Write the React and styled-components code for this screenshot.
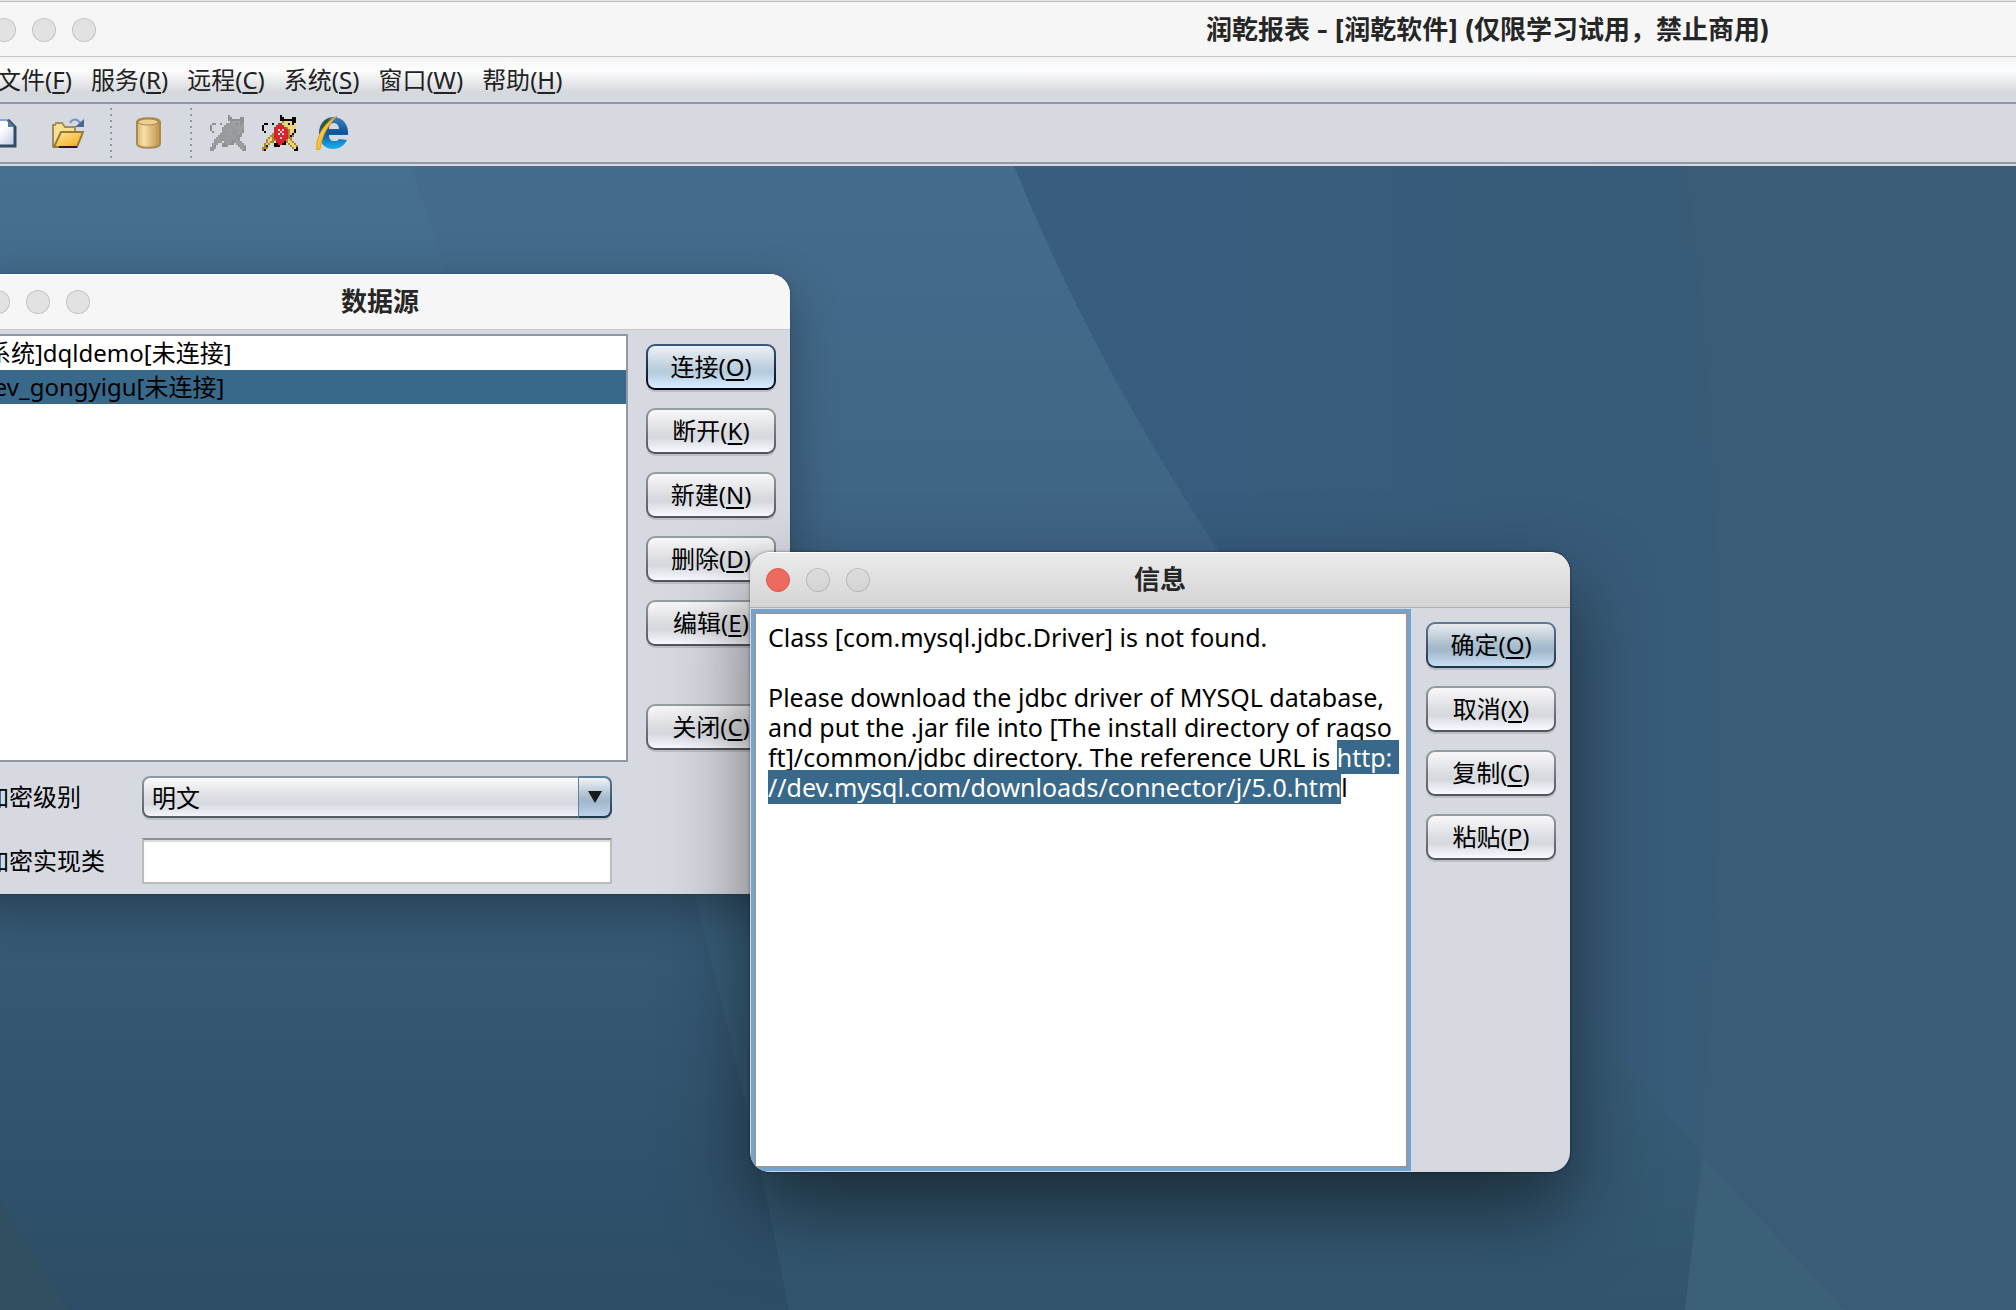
import React, { useEffect, useRef } from "react";
import styled, { createGlobalStyle, css } from "styled-components";

const GlobalStyle = createGlobalStyle`
* {
    box-sizing: border-box;
}
body {
    margin: 0;
    font-family: "Noto Sans", "Noto Sans CJK SC", sans-serif;
    font-size: 24px;
    color: #000;
}
button, select, input, textarea {
    font: inherit;
    color: inherit;
}
`;

const Screen = styled.div`
    min-height: 100vh;
    overflow: hidden;
    background: #e6e6e6;
    padding-top: 1px;
    display: flex;
`;

/* the frame is wider than the screen, its left edge is pushed outside */
const Frame = styled.div`
    flex: none;
    width: 150vw;
    margin-left: -24px;
    display: flex;
    flex-direction: column;
`;

const TitleBar = styled.header`
    display: grid;
    grid-template-columns: 1fr auto 1fr;
    align-items: center;
    height: 56px;
    padding: 0 16px;
    background: #f6f6f6;
    border-top: 1px solid #fff;
    border-bottom: 1px solid #c9c5c9;

    ${(props) =>
        props.$main &&
        css`
            padding-top: 2px;
            border-top-color: #bdbdbd;
        `}
    ${(props) =>
        props.$active &&
        css`
            background: linear-gradient(#ebebeb, #d4d4d4);
            border-bottom-color: #aeaeae;
        `}
`;

const Title = styled.h1`
    margin: 0;
    font-family: Inter, "Noto Sans CJK SC", sans-serif;
    font-size: 26px;
    line-height: 32px;
    font-weight: 700;
    color: #262626;
    white-space: nowrap;
`;

const Lights = styled.div`
    display: flex;
    gap: 16px;
`;

const Light = styled.button`
    width: 24px;
    height: 24px;
    padding: 0;
    border-radius: 50%;
    border: 1px solid ${(props) => (props.$red ? "#d9584d" : "rgba(0, 0, 0, 0.14)")};
    background: ${(props) => (props.$red ? "#ec6a5e" : "rgba(0, 0, 0, 0.08)")};

    ${(props) =>
        props.$dim &&
        css`
            background: rgba(0, 0, 0, 0.03);
        `}
`;

const MenuBar = styled.nav`
    display: flex;
    gap: 1px;
    height: 47px;
    padding-left: 12px;
    background: linear-gradient(#f3f6f5, #fdfdfd 30%, #d5d8dd 78%, #d6d9e0);
    border-bottom: 2px solid #9297a5;
`;

const MenuItem = styled.button`
    border: 0;
    background: none;
    padding: 0 9px;
    line-height: 32px;
    color: #222;
    white-space: nowrap;
`;

const Key = styled.span`
    text-decoration: underline;
    text-decoration-thickness: 2px;
    text-underline-offset: 3px;
`;

const ToolBar = styled.div`
    display: flex;
    align-items: center;
    height: 60px;
    padding-left: 2px;
    background: #d6d9e0;
    border-bottom: 2px solid #9297a5;
`;

const Tool = styled.button`
    display: flex;
    align-items: center;
    justify-content: center;
    width: 52px;
    height: 52px;
    padding: 0;
    border: 0;
    background: none;
    margin-right: ${(props) => (props.$gap ? "12px" : "0")};
`;

const Separator = styled.div`
    width: 2px;
    height: 50px;
    margin: 0 10px 0 16px;
    background: repeating-linear-gradient(#9297a5 0 2px, transparent 2px 6px);
`;

const Desktop = styled.main`
    position: relative;
    flex: 1;
    width: 100vw;
    margin-left: 24px;
    border-top: 2px solid #d6d9e0;
`;

const Wallpaper = styled.svg`
    position: absolute;
    inset: 0;
    width: 100%;
    height: 100%;
`;

const Window = styled.section`
    position: absolute;
    left: ${(props) => props.$x}px;
    top: ${(props) => props.$y}px;
    width: 820px;
    height: 620px;
    display: flex;
    flex-direction: column;
    border-radius: 20px;
    overflow: hidden;
    background: #d6d9e0;
    box-shadow: ${(props) =>
        props.$active
            ? "0 36px 80px rgba(0, 0, 0, 0.5), 0 0 3px rgba(0, 0, 0, 0.5)"
            : "0 16px 48px rgba(0, 0, 0, 0.3), 0 0 2px rgba(0, 0, 0, 0.4)"};
`;

const Body = styled.div`
    flex: 1;
    display: flex;
    padding: 4px 14px 10px 3px;
    gap: 18px;
`;

const DialogBody = styled(Body)`
    padding: 4px 14px 4px 4px;
`;

const Left = styled.div`
    flex: 1;
    display: flex;
    flex-direction: column;
`;

const List = styled.ul`
    flex: 1;
    margin: 0;
    padding: 0;
    list-style: none;
    background: #fff;
    border: 2px solid #9297a5;
`;

const Row = styled.li`
    height: 34px;
    line-height: 34px;
    padding-left: 4px;
    white-space: pre;
    background: ${(props) => (props.$selected ? "#39698a" : "#fff")};
`;

const Form = styled.form`
    display: grid;
    grid-template-columns: 157px 1fr;
    row-gap: 20px;
    align-items: center;
    padding: 14px 16px 0 12px;
`;

const Label = styled.label`
    white-space: nowrap;
    line-height: 32px;
`;

const SelectBox = styled.div`
    display: grid;
    grid-template-columns: 1fr 32px;
    height: 42px;
    border: 2px solid transparent;
    border-radius: 8px;
    background:
        linear-gradient(#fafafb, #dddee2 50%, #d6d9e0 68%, #f3f5fd) padding-box,
        linear-gradient(#9297a1, #535a64) border-box;
    box-shadow: 0 2px 0 #bbbec5;
`;

const Select = styled.select`
    grid-area: 1 / 1 / 2 / 3;
    appearance: none;
    border: 0;
    background: none;
    padding: 0 8px;
    outline: none;
`;

const Arrow = styled.span`
    grid-area: 1 / 2 / 2 / 3;
    display: flex;
    align-items: center;
    justify-content: center;
    margin: -2px -2px -2px 0;
    border: 2px solid transparent;
    border-left: 1px solid #5f819c;
    border-radius: 0 8px 8px 0;
    background:
        linear-gradient(#f0f4f7, #adc2d1 45%, #a0b7cc 60%, #bcd2e8) padding-box,
        linear-gradient(#5f819c, #1f3a50) border-box;
    pointer-events: none;
`;

const Input = styled.input`
    width: 100%;
    height: 46px;
    padding: 0 8px;
    border: 2px solid #bcbcbc;
    border-top-color: #8d8e91;
    box-shadow: inset 0 2px 1px #d9d9d9;
    outline: none;
`;

const Buttons = styled.div`
    display: flex;
    flex-direction: column;
    gap: 18px;
    padding-top: 10px;
`;

const PushButton = styled.button`
    width: 130px;
    height: 46px;
    padding: 0;
    line-height: 32px;
    white-space: nowrap;
    border: 2px solid transparent;
    border-radius: 9px;
    background:
        linear-gradient(#f8f8fa, #dcdde1 50%, #d6d8de 65%, #f9faff) padding-box,
        linear-gradient(#989da2, #4f545c) border-box;
    box-shadow: 0 2px 0 #bbbec5;
    margin-top: ${(props) => (props.$apart ? "40px" : "0")};

    ${(props) =>
        props.$kind === "focused" &&
        css`
            background:
                linear-gradient(#ecf1f5, #bfd0df 50%, #b4cadd 62%, #d8edff) padding-box,
                linear-gradient(#3d5a78, #00001f) border-box;
        `}
    ${(props) =>
        props.$kind === "default" &&
        css`
            background:
                linear-gradient(#e6ebef, #aabecd 50%, #a0b7c9 62%, #c8dff3) padding-box,
                linear-gradient(#5f7b96, #1c3448) border-box;
        `}
`;

const Message = styled.textarea`
    flex: 1;
    min-width: 0;
    padding: 8px 12px;
    font-size: 25px;
    line-height: 30px;
    white-space: pre;
    resize: none;
    overflow: hidden;
    border: 2px solid #9297a1;
    outline: 3px solid #73a4d1;
    background: #fff;

    &::selection {
        background: #39698a;
        color: #fff;
    }
`;

const MENUS = [
    ["文件", "F"],
    ["服务", "R"],
    ["远程", "C"],
    ["系统", "S"],
    ["窗口", "W"],
    ["帮助", "H"],
];

const MESSAGE = `Class [com.mysql.jdbc.Driver] is not found.

Please download the jdbc driver of MYSQL database,
and put the .jar file into [The install directory of raqso
ft]/common/jdbc directory. The reference URL is http:
//dev.mysql.com/downloads/connector/j/5.0.html`;

const CAT = [
    ".........k........",
    ".........kk....kk.",
    ".........kkkkkkkk.",
    "..........oyyyykk.",
    ".kk..k..rryyykyky.",
    "k......rrrryyyyyy.",
    "k.....rrrrrroyyyy.",
    "k.....rrwrwrroyyk.",
    ".k....rrrwrrroyyk.",
    ".....orrwrwrroyk..",
    "....oorrrrrrroko..",
    "...oyorrrwrrroo...",
    "..oyyoorrrrroyo...",
    "..oyoo.rrrrkoyyo..",
    ".oyo..kkrrkk.oyyo.",
    ".ok...kkk.....oyyo",
    "ooo............oyk",
    "ok..............kk",
];

const COLORS = { k: "#0d0803", y: "#ecd37c", o: "#a8862a", r: "#d8232f", w: "#f6d5d5" };
const GRAYS = { k: "#8f9092", y: "#9d9ea0", o: "#97989a", r: "#999a9c", w: "#9d9ea0" };

function CatIcon({ colors }) {
    return (
        <svg width="36" height="36" viewBox="0 0 18 18" shapeRendering="crispEdges">
            {CAT.map((line, y) =>
                line.split("").map((c, x) =>
                    c === "." ? null : <rect key={x + "-" + y} x={x} y={y} width="1" height="1" fill={colors[c]} />
                )
            )}
        </svg>
    );
}

function NewIcon() {
    return (
        <svg width="26" height="30" viewBox="0 0 26 30">
            <defs>
                <linearGradient id="paper" x1="0" y1="0" x2="1" y2="1">
                    <stop offset="0.4" stopColor="#fff" />
                    <stop offset="1" stopColor="#b9c4e0" />
                </linearGradient>
            </defs>
            <path d="M1 2H18L24 8V28H1Z" fill="url(#paper)" />
            <path d="M1 2H18" stroke="#8ba3cf" strokeWidth="2" />
            <path d="M17 2L24 9V28H1" fill="none" stroke="#2f4b66" strokeWidth="3" />
            <path d="M17 2V9H24Z" fill="#5b7a99" />
        </svg>
    );
}

function OpenIcon() {
    return (
        <svg width="34" height="32" viewBox="0 0 34 32">
            <defs>
                <linearGradient id="flap" x1="0" y1="0" x2="1" y2="1">
                    <stop offset="0" stopColor="#ffe79a" />
                    <stop offset="1" stopColor="#f3a812" />
                </linearGradient>
            </defs>
            <path d="M2 30V8H4L5 6H11L14 10H24V16" fill="#f6df8e" stroke="#a08c5c" strokeWidth="2" />
            <path d="M3 30L10 15H32L26 30Z" fill="url(#flap)" stroke="#947a3c" strokeWidth="2" />
            <path d="M8 30H26" stroke="#2a1a08" strokeWidth="2" />
            <path d="M19 6C21 2 26 1 29 6" fill="none" stroke="#7b92b8" strokeWidth="2" />
            <path d="M33 2V10H24Z" fill="#4c6792" />
        </svg>
    );
}

function DataIcon() {
    return (
        <svg width="26" height="32" viewBox="0 0 26 32">
            <defs>
                <linearGradient id="can">
                    <stop offset="0" stopColor="#d9b673" />
                    <stop offset="0.3" stopColor="#f7dfa8" />
                    <stop offset="1" stopColor="#bd924a" />
                </linearGradient>
            </defs>
            <path d="M2 5C2 0 25 0 25 5V27C25 32 2 32 2 27Z" fill="url(#can)" stroke="#ab8a50" strokeWidth="2" />
            <ellipse cx="13" cy="5" rx="10" ry="3" fill="#efd092" stroke="#a98547" />
        </svg>
    );
}

function BrowserIcon() {
    return (
        <svg width="34" height="36" viewBox="0 0 34 36">
            <defs>
                <linearGradient id="globe" x1="0" y1="0" x2="0" y2="1">
                    <stop offset="0" stopColor="#3c82b8" />
                    <stop offset="0.5" stopColor="#0b559c" />
                    <stop offset="1" stopColor="#19b3f4" />
                </linearGradient>
            </defs>
            <path
                d="M32 25C29 31 24 34 18 34C9 34 4 27 4 18C4 9 10 2 18 2C28 2 34 10 33 20H14C14 24 16 26 19 26C21 26 23 26 24 24ZM14 14H24C24 10 21 8 19 8C16 8 14 10 14 14Z"
                fill="url(#globe)"
            />
            <path d="M5 14C6 8 10 4 15 3L9 15Z" fill="#39583c" />
            <path d="M2 35C0 23 9 8 22 1C13 10 7 20 5 34Z" fill="#f7c23c" stroke="#e9a214" />
        </svg>
    );
}

function Background() {
    return (
        <Wallpaper viewBox="0 0 2016 1144" preserveAspectRatio="none" aria-hidden="true">
            <defs>
                <linearGradient id="base" x1="0" y1="0" x2="0" y2="1">
                    <stop offset="0" stopColor="#466f90" />
                    <stop offset="0.35" stopColor="#3f6483" />
                    <stop offset="0.65" stopColor="#375a76" />
                    <stop offset="1" stopColor="#2d4d66" />
                </linearGradient>
                <linearGradient id="middle" x1="0" y1="0" x2="0" y2="1">
                    <stop offset="0" stopColor="#456c8d" />
                    <stop offset="0.35" stopColor="#3f6484" />
                    <stop offset="0.65" stopColor="#3a607b" />
                    <stop offset="1" stopColor="#32556d" />
                </linearGradient>
                <linearGradient id="right">
                    <stop offset="0" stopColor="#385d80" />
                    <stop offset="0.7" stopColor="#385b77" />
                    <stop offset="1" stopColor="#395b76" />
                </linearGradient>
            </defs>
            <rect width="2016" height="1144" fill="url(#base)" />
            <path d="M411 0Q520 350 694 727Q750 940 789 1144H2016V0Z" fill="url(#middle)" />
            <path d="M1014 0Q1093 195 1219 386Q1400 640 1607 874L1703 991L1685 1144H2016V0Z" fill="url(#right)" />
            <path d="M1685 0Q1752 500 1685 1144H2016V0Z" fill="#3b5e75" fillOpacity="0.5" />
            <path d="M1703 991L1845 1144H1685Z" fill="#3c6078" />
            <path d="M0 1035L68 1144H0Z" fill="#304f60" />
        </Wallpaper>
    );
}

function WindowTitle({ title, active, main }) {
    return (
        <TitleBar $active={active} $main={main}>
            <Lights>
                <Light type="button" aria-label="关闭窗口" $red={active} />
                <Light type="button" aria-label="最小化" $dim={active} />
                <Light type="button" aria-label="缩放" $dim={active} />
            </Lights>
            <Title>{title}</Title>
        </TitleBar>
    );
}

function ActionButton({ text, hotkey, kind, apart }) {
    return (
        <PushButton type="button" $kind={kind} $apart={apart}>
            {text}(<Key>{hotkey}</Key>)
        </PushButton>
    );
}

function DataSourceWindow() {
    return (
        <Window $x={-30} $y={108}>
            <WindowTitle title="数据源" />
            <Body>
                <Left>
                    <List role="listbox" aria-label="数据源">
                        <Row role="option" aria-selected="false">[系统]dqldemo[未连接]</Row>
                        <Row role="option" aria-selected="true" $selected>dev_gongyigu[未连接]</Row>
                    </List>
                    <Form>
                        <Label htmlFor="level">加密级别</Label>
                        <SelectBox>
                            <Select id="level" defaultValue="明文">
                                <option>明文</option>
                            </Select>
                            <Arrow>
                                <svg width="14" height="12" viewBox="0 0 14 12">
                                    <path d="M0 0H14L7 12Z" fill="#1a1a1a" />
                                </svg>
                            </Arrow>
                        </SelectBox>
                        <Label htmlFor="impl">加密实现类</Label>
                        <Input id="impl" type="text" />
                    </Form>
                </Left>
                <Buttons>
                    <ActionButton text="连接" hotkey="O" kind="focused" />
                    <ActionButton text="断开" hotkey="K" />
                    <ActionButton text="新建" hotkey="N" />
                    <ActionButton text="删除" hotkey="D" />
                    <ActionButton text="编辑" hotkey="E" />
                    <ActionButton text="关闭" hotkey="C" apart />
                </Buttons>
            </Body>
        </Window>
    );
}

function MessageWindow() {
    const box = useRef(null);

    useEffect(() => {
        box.current.focus();
        box.current.setSelectionRange(MESSAGE.indexOf("http:"), MESSAGE.length - 1);
    }, []);

    return (
        <Window $x={750} $y={386} $active>
            <WindowTitle title="信息" active />
            <DialogBody>
                <Message ref={box} aria-label="信息" defaultValue={MESSAGE} spellCheck="false" />
                <Buttons>
                    <ActionButton text="确定" hotkey="O" kind="default" />
                    <ActionButton text="取消" hotkey="X" />
                    <ActionButton text="复制" hotkey="C" />
                    <ActionButton text="粘贴" hotkey="P" />
                </Buttons>
            </DialogBody>
        </Window>
    );
}

function App() {
    return (
        <Screen>
            <GlobalStyle />
            <Frame>
                <WindowTitle title="润乾报表 - [润乾软件] (仅限学习试用，禁止商用)" main />
                <MenuBar>
                    {MENUS.map(([text, hotkey]) => (
                        <MenuItem key={hotkey} type="button">
                            {text}(<Key>{hotkey}</Key>)
                        </MenuItem>
                    ))}
                </MenuBar>
                <ToolBar>
                    <Tool type="button" aria-label="新建" $gap><NewIcon /></Tool>
                    <Tool type="button" aria-label="打开"><OpenIcon /></Tool>
                    <Separator />
                    <Tool type="button" aria-label="数据源"><DataIcon /></Tool>
                    <Separator />
                    <Tool type="button" aria-label="启动服务"><CatIcon colors={GRAYS} /></Tool>
                    <Tool type="button" aria-label="停止服务"><CatIcon colors={COLORS} /></Tool>
                    <Tool type="button" aria-label="浏览器"><BrowserIcon /></Tool>
                </ToolBar>
                <Desktop>
                    <Background />
                    <DataSourceWindow />
                    <MessageWindow />
                </Desktop>
            </Frame>
        </Screen>
    );
}

export default App;
